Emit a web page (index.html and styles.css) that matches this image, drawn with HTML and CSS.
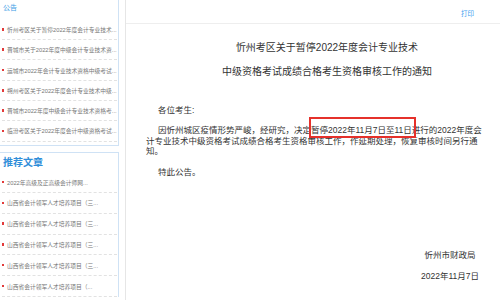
FILE: index.html
```html
<!doctype html>
<html lang="zh-CN">
<head>
    <meta charset="UTF-8">
    <meta name="viewport" content="width=device-width, initial-scale=1.0">
    <title>忻州考区关于暂停2022年度会计专业技术中级资格考试成绩合格考生资格审核工作的通知</title>
    <link rel="stylesheet" href="styles.css">
</head>
<body>
<div class="page">
    <aside class="side">
        <div class="panel panel--notice">
            <h3 class="panel__title">公告</h3>
            <ul class="panel__list">
                <li><a href="#">忻州考区关于暂停2022年度会计专业技术...</a></li>
                <li><a href="#">晋城市关于2022年度中级会计专业技术资...</a></li>
                <li><a href="#">运城市2022年会计专业技术资格中级考试...</a></li>
                <li><a href="#">朔州考区关于2022年度会计专业技术中级...</a></li>
                <li><a href="#">晋城市2022年度中级会计专业技术资格考...</a></li>
                <li><a href="#">临汾考区关于2022年度会计中级资格考试...</a></li>
            </ul>
        </div>
        <div class="panel panel--recommend">
            <h3 class="panel__title">推荐文章</h3>
            <ul class="panel__list">
                <li><a href="#">2022年高级及正高级会计师网...</a></li>
                <li><a href="#">山西省会计领军人才培养项目（三...</a></li>
                <li><a href="#">山西省会计领军人才培养项目（三...</a></li>
                <li><a href="#">山西省会计领军人才培养项目（三...</a></li>
                <li><a href="#">山西省会计领军人才培养项目（三...</a></li>
                <li><a href="#">山西省会计领军人才培养项目（...</a></li>
            </ul>
        </div>
    </aside>
    <main class="article">
        <div class="article__bar">
            <a class="article__print" href="#">打印</a>
        </div>
        <div class="article__body">
            <h1 class="article__title">忻州考区关于暂停2022年度会计专业技术<br>中级资格考试成绩合格考生资格审核工作的通知</h1>
            <p class="article__line">各位考生:</p>
            <p class="article__para">因忻州城区疫情形势严峻，经研究，决定<span class="mark">暂停2022年11月7日至11日</span>进行的2022年度会<br>计专业技术中级资格考试成绩合格考生资格审核工作，作延期处理，恢复审核时间另行通<br>知。</p>
            <p class="article__line">特此公告。</p>
            <div class="article__sign">
                <div class="sign">
                    <p>忻州市财政局</p>
                    <p>2022年11月7日</p>
                </div>
            </div>
        </div>
    </main>
</div>
</body>
</html>
```

FILE: styles.css
```css
html,body{margin:0;padding:0;height:100%;overflow:hidden;background:#fff;font-family:"Liberation Sans","Noto Sans CJK SC",sans-serif;color:#333}
ul,p,h1,h3{margin:0;padding:0}
ul{list-style:none}
a{text-decoration:none}

.page{display:flex;height:300px;gap:6px}

/* sidebar */
.side{width:119px;flex:none}
.panel{border-right:1px solid #cfe2f5}
.panel--notice{border-bottom:1px solid #cfe2f5;padding-bottom:3px}
.panel--recommend{border-top:1px solid #cfe2f5;margin-top:6px}
.panel__title{font-weight:normal;color:#3b9de6;padding-left:3px}
.panel--notice .panel__title{height:19.7px;line-height:16px;font-size:7px}
.panel--recommend .panel__title{height:19.5px;line-height:19.5px;font-size:10px;font-weight:bold;color:#2f8ed9}
.panel__list li{display:flex;align-items:center;margin:0 1px 0 2px;border-bottom:1px dashed #e2e2e2;white-space:nowrap;overflow:hidden}
.panel--notice .panel__list li{height:19.33px}
.panel--recommend .panel__list li{height:19.8px}
.panel__list li:before{content:"";flex:none;width:1.5px;height:2.5px;background:#e23a3a;margin-right:3.5px}
.panel__list a{font-size:5.75px;color:#777}

/* article */
.article{flex:1;border-left:1px solid #e6e6e6}
.article__bar{height:23px;line-height:22px;border-bottom:1px solid #eee;text-align:right;padding-right:26px}
.article__print{font-size:6.5px;color:#3a9ef0}
.article__body{padding:12px 4px 0 20px}
.article__title{font-size:10px;line-height:24px;font-weight:normal;text-align:center;padding:0 12px 0 24px;margin-bottom:20.5px}
.article__line,.article__para{font-size:8.5px;line-height:10.5px;text-indent:12px;margin-bottom:10px}
.mark{position:relative}
.mark:after{content:"";position:absolute;left:-2px;right:-4px;top:-8px;bottom:-2.5px;border:2px solid #e5312b}
.article__sign{display:flex;justify-content:flex-end;margin-top:68px;padding-right:17px}
.sign{text-align:center;font-size:8.5px;line-height:21px}
```
